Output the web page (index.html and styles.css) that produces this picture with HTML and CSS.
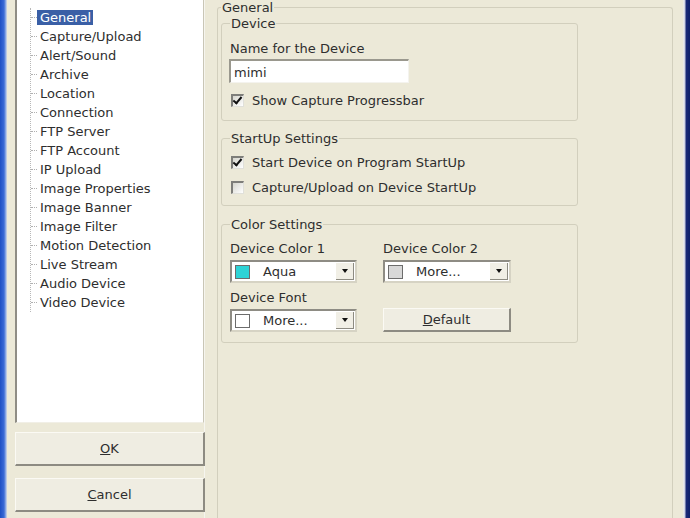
FILE: index.html
```html
<!DOCTYPE html>
<html lang="en">
<head>
  <meta charset="UTF-8" />
  <title>Device Settings</title>
  <link rel="stylesheet" href="styles.css">
</head>
<body>

  <div class="window">
    <div class="edge-left"></div>

    <div class="sidebar">
      <div class="tree">
        <ul>
          <li><span class="selected">General</span></li>
          <li><span>Capture/Upload</span></li>
          <li><span>Alert/Sound</span></li>
          <li><span>Archive</span></li>
          <li><span>Location</span></li>
          <li><span>Connection</span></li>
          <li><span>FTP Server</span></li>
          <li><span>FTP Account</span></li>
          <li><span>IP Upload</span></li>
          <li><span>Image Properties</span></li>
          <li><span>Image Banner</span></li>
          <li><span>Image Filter</span></li>
          <li><span>Motion Detection</span></li>
          <li><span>Live Stream</span></li>
          <li><span>Audio Device</span></li>
          <li><span>Video Device</span></li>
        </ul>
      </div>
      <button class="btn side-btn"><u>O</u>K</button>
      <button class="btn side-btn"><u>C</u>ancel</button>
    </div>

    <div class="main">
      <fieldset class="group outer">
        <legend>General</legend>

        <fieldset class="group device">
          <legend>Device</legend>
          <div class="label">Name for the Device</div>
          <div class="textbox">mimi</div>
          <label class="check"><span class="box checked"></span>Show Capture Progressbar</label>
        </fieldset>

        <fieldset class="group startup">
          <legend>StartUp Settings</legend>
          <label class="check"><span class="box checked"></span>Start Device on Program StartUp</label>
          <label class="check"><span class="box"></span>Capture/Upload on Device StartUp</label>
        </fieldset>

        <fieldset class="group colors">
          <legend>Color Settings</legend>
          <div class="color-grid">
            <div class="field">
              <div class="label">Device Color 1</div>
              <div class="combo">
                <span class="swatch" style="background:#2ed3d6"></span>
                <span class="combo-text">Aqua</span>
                <span class="arrow"></span>
              </div>
            </div>
            <div class="field">
              <div class="label">Device Color 2</div>
              <div class="combo">
                <span class="swatch" style="background:#d8d8d8"></span>
                <span class="combo-text">More...</span>
                <span class="arrow"></span>
              </div>
            </div>
            <div class="field">
              <div class="label">Device Font</div>
              <div class="combo">
                <span class="swatch" style="background:#ffffff"></span>
                <span class="combo-text">More...</span>
                <span class="arrow"></span>
              </div>
            </div>
            <div class="field field-btn">
              <button class="btn default-btn"><u>D</u>efault</button>
            </div>
          </div>
        </fieldset>
      </fieldset>
    </div>

    <div class="edge-right"></div>
  </div>

</body>
</html>
```

FILE: styles.css
```css
* {
  box-sizing: border-box;
}

html, body {
  height: 100%;
}

body {
  margin: 0;
  overflow: hidden;
  background-color: #ece9d8;
  font-family: 'DejaVu Sans', 'Liberation Sans', sans-serif;
  font-size: 13px;
  line-height: 15px;
  color: #2e2e2e;
}

.window {
  display: flex;
  height: 100%;
}

.edge-left {
  width: 7px;
  background: linear-gradient(to right, #1d4fc4 0, #3a6ad6 4px, #9ab4e6 6px, #d8dde8 7px);
}

.edge-right {
  width: 7px;
  background: linear-gradient(to right, #f4f3ee 0, #c9cde0 2px, #1b2a78 3px, #0e1f6a 7px);
}

/* left column: tree + buttons */

.sidebar {
  width: 198px;
  padding: 0 0 6px 8px;
  display: flex;
  flex-direction: column;
  border-right: 1px solid #f6f5ef;
}

.tree {
  flex: 1;
  background-color: #fff;
  border-left: 2px solid #8f8d85;
  border-right: 1px solid #c9c6b6;
  border-bottom: 1px solid #f1efe6;
  margin-bottom: 9px;
  padding-top: 8px;
}

.tree ul {
  list-style: none;
  margin: 0 0 0 13px;
  padding: 0;
  border-left: 1px dotted #b8b8b8;
}

.tree li {
  height: 19px;
  display: flex;
  align-items: center;
  padding-left: 6px;
  position: relative;
}

.tree li::before {
  content: "";
  position: absolute;
  left: 0;
  top: 9px;
  width: 6px;
  border-top: 1px dotted #b0b0b0;
}

.tree li span {
  padding: 0 2px 0 3px;
  white-space: nowrap;
}

.tree li .selected {
  background-color: #3a5fa6;
  color: #fff;
}

.btn {
  font-family: inherit;
  font-size: 13px;
  color: #2e2e2e;
  background-color: #efede2;
  border: 1px solid #fbfaf4;
  border-right: 2px solid #8d8b82;
  border-bottom: 2px solid #8d8b82;
  cursor: pointer;
}

.side-btn {
  width: 190px;
  height: 34px;
  margin-bottom: 12px;
}

.side-btn:last-child {
  margin-bottom: 0;
}

/* right column */

.main {
  flex: 1;
  padding: 0 10px 0 12px;
  overflow: hidden;
}

.group {
  border: 1px solid #d2cfbd;
  border-radius: 3px;
  margin: 0;
  min-width: 0;
}

.group legend {
  padding: 0 1px;
  line-height: 15px;
}

.outer {
  height: calc(100% + 10px);
  padding: 0 0 0 3px;
  border-bottom: none;
}

.device,
.startup,
.colors {
  width: 357px;
  padding: 0 8px;
}

.device {
  margin-top: 1px;
  padding-top: 10px;
  padding-bottom: 12px;
}

.startup {
  margin-top: 10px;
  padding-top: 9px;
  padding-bottom: 10px;
}

.colors {
  margin-top: 11px;
  padding-top: 9px;
  padding-bottom: 10px;
}

.label {
  height: 15px;
}

.textbox {
  width: 180px;
  height: 24px;
  margin: 3px 0 0 -1px;
  padding: 4px 3px;
  background-color: #fff;
  border-top: 2px solid #9a988e;
  border-left: 2px solid #9a988e;
  border-right: 1px solid #f4f3ee;
  border-bottom: 1px solid #f4f3ee;
}

.check {
  display: flex;
  align-items: center;
  height: 15px;
  margin-top: 10px;
}

.startup .check:first-of-type {
  margin-top: 0;
}

.check + .check {
  margin-top: 10px;
}

.box {
  width: 13px;
  height: 13px;
  margin: 0 8px 0 1px;
  background: linear-gradient(135deg, #d6d6ce, #fff);
  border: 2px solid #7e7e7a;
  border-right: 1px solid #e0e0da;
  border-bottom: 1px solid #e0e0da;
  position: relative;
}

.box.checked::after {
  content: "";
  position: absolute;
  left: 2px;
  top: -1px;
  width: 3px;
  height: 7px;
  border-right: 2px solid #111;
  border-bottom: 2px solid #111;
  transform: rotate(40deg);
}

.color-grid {
  display: grid;
  grid-template-columns: 127px 128px;
  column-gap: 26px;
  row-gap: 7px;
}

.combo {
  display: flex;
  align-items: center;
  height: 23px;
  margin-top: 4px;
  background-color: #fff;
  border-top: 2px solid #8e8c84;
  border-left: 2px solid #8e8c84;
  border-right: 2px solid #d6d3c4;
  border-bottom: 2px solid #d6d3c4;
  padding-left: 3px;
}

.swatch {
  width: 15px;
  height: 14px;
  border: 1px solid #6c6c6c;
}

.combo-text {
  flex: 1;
  padding-left: 13px;
}

.arrow {
  width: 18px;
  height: 17px;
  margin-right: 1px;
  background-color: #f1efe6;
  border-right: 1px solid #8d8b82;
  border-bottom: 1px solid #8d8b82;
  display: flex;
  align-items: center;
  justify-content: center;
}

.arrow::after {
  content: "";
  border-left: 3px solid transparent;
  border-right: 3px solid transparent;
  border-top: 4px solid #111;
}

.field-btn {
  display: flex;
  align-items: flex-end;
}

.default-btn {
  width: 128px;
  height: 24px;
}
```
